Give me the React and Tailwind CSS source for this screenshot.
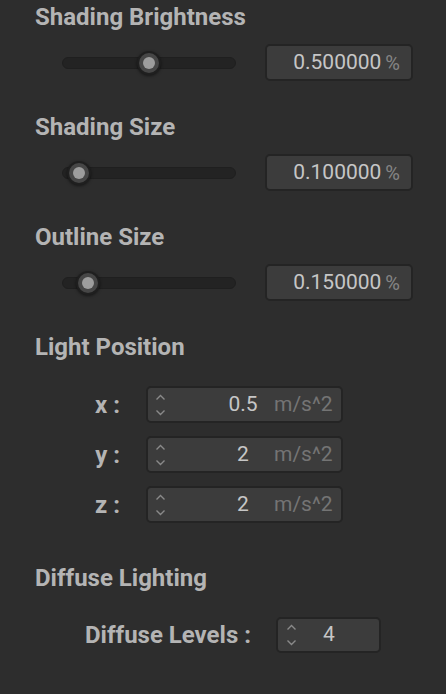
import React from 'react'

const sliders = [
  { label: 'Shading Brightness', value: '0.500000', thumb: 149 },
  { label: 'Shading Size', value: '0.100000', thumb: 79 },
  { label: 'Outline Size', value: '0.150000', thumb: 88 },
]

const position = [
  { axis: 'x', value: '0.5' },
  { axis: 'y', value: '2' },
  { axis: 'z', value: '2' },
]

const Heading = ({ children }) => (
  <h2 className="text-[24px] leading-[28px] font-bold text-[#b4b4b4]">{children}</h2>
)

const Spinner = () => (
  <div className="flex h-[22px] w-[11px] flex-col justify-between">
    <svg width="11" height="7" viewBox="0 0 11 7" fill="none">
      <path d="M1.5 5.5 L5.5 1.5 L9.5 5.5" stroke="#8a8a8a" strokeWidth="1.4" />
    </svg>
    <svg width="11" height="7" viewBox="0 0 11 7" fill="none">
      <path d="M1.5 1.5 L5.5 5.5 L9.5 1.5" stroke="#8a8a8a" strokeWidth="1.4" />
    </svg>
  </div>
)

const Slider = ({ thumb }) => (
  <div className="relative ml-[27px] h-[12px] w-[174px] rounded-full border border-[#1f1f1f] bg-[#232323]">
    {/* thumb: x is the centre in page coords, track starts at 62 */}
    <div
      className="absolute top-1/2 flex h-[24px] w-[24px] -translate-x-1/2 -translate-y-1/2 items-center justify-center rounded-full bg-[#1f1f1f] shadow-[0_1px_3px_rgba(0,0,0,0.5)]"
      style={{ left: thumb - 62 - 1 }}
    >
      <div className="flex h-[20px] w-[20px] items-center justify-center rounded-full bg-[#464646]">
        <div className="h-[12px] w-[12px] rounded-full bg-[#9d9d9d]" />
      </div>
    </div>
  </div>
)

export default function App() {
  return (
    <div
      className="min-h-screen w-full bg-[#2d2d2d] pl-[35px] pt-[3px]"
      style={{ fontFamily: 'Roboto, "Liberation Sans", sans-serif' }}
    >
      {sliders.map((s, i) => (
        <section key={s.label} className={i > 0 ? 'mt-[32px]' : ''}>
          <Heading>{s.label}</Heading>
          <div className="mt-[13px] flex items-center">
            <Slider thumb={s.thumb} />
            <div className="ml-[29px] flex h-[37px] w-[148px] items-center justify-end rounded-[5px] border-2 border-[#242424] bg-[#3c3c3c] pr-[11px]">
              <span className="text-[21px] leading-none text-[#c6c6c6]">{s.value}</span>
              <span className="ml-[4px] text-[20px] leading-none text-[#858585]">%</span>
            </div>
          </div>
        </section>
      ))}

      <section className="mt-[32px]">
        <Heading>Light Position</Heading>
        <div className="mt-[25px] flex flex-col gap-[13px]">
          {position.map((p) => (
            <div key={p.axis} className="flex items-center">
              <div className="w-[85px] text-right text-[24px] font-bold text-[#b4b4b4]">{p.axis} :</div>
              <div className="ml-[26px] flex h-[37px] w-[197px] items-center rounded-[5px] border-2 border-[#242424] bg-[#3c3c3c] pl-[7px]">
                <Spinner />
                <span className="ml-[46px] w-[62px] text-center text-[21px] text-[#c6c6c6]">{p.value}</span>
                <span className="text-[21px] text-[#747474]">m/s^2</span>
              </div>
            </div>
          ))}
        </div>
      </section>

      <section className="mt-[41px]">
        <Heading>Diffuse Lighting</Heading>
        <div className="mt-[25px] flex items-center">
          <div className="ml-[50px] text-[24px] font-bold text-[#b4b4b4]">Diffuse Levels :</div>
          <div className="ml-[25px] flex h-[36px] w-[105px] items-center rounded-[5px] border-2 border-[#242424] bg-[#3c3c3c] pl-[8px]">
            <Spinner />
            <span className="ml-[14px] w-[36px] text-center text-[21px] text-[#c6c6c6]">4</span>
          </div>
        </div>
      </section>
    </div>
  )
}
